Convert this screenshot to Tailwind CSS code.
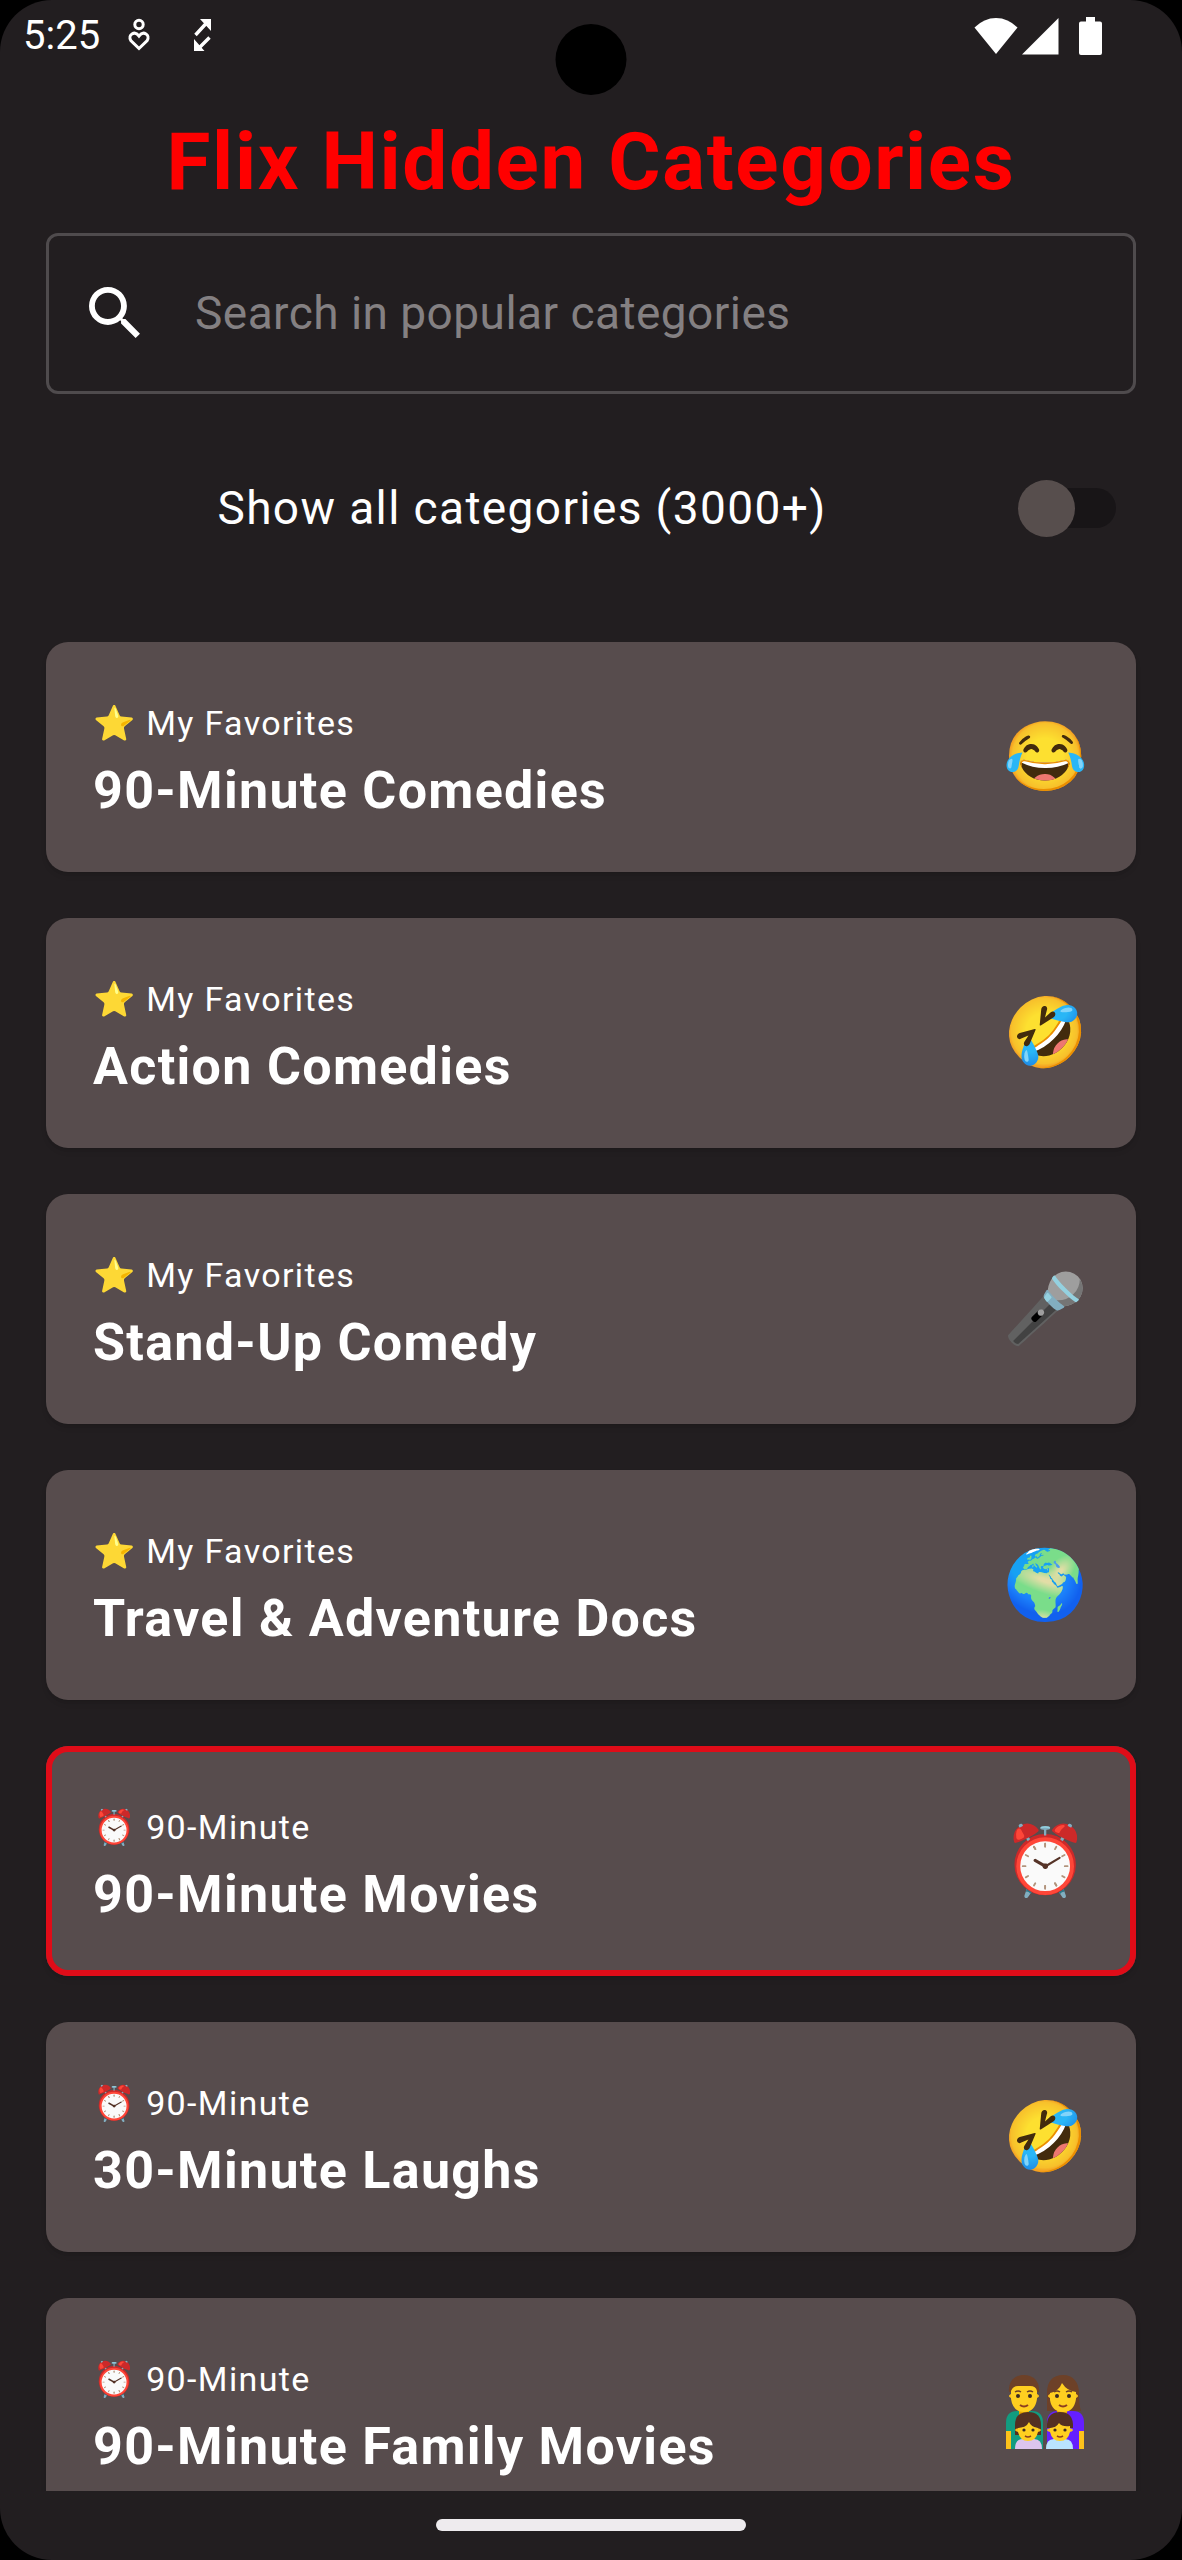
<!DOCTYPE html>
<html lang="en">
<head>
<meta charset="utf-8">
<meta name="viewport" content="width=device-width, initial-scale=1">
<title>Flix Hidden Categories</title>
<script src="https://cdn.jsdelivr.net/npm/@tailwindcss/browser@4"></script>
</head>
<body class="bg-black font-['Roboto',sans-serif] text-white">
<div class="relative flex h-screen flex-col overflow-hidden rounded-[52px] bg-[#221e20]">

  <!-- Status bar -->
  <header class="flex h-[72px] shrink-0 items-center justify-between pr-20 pl-[23px]">
    <div class="flex items-center">
      <time class="text-[40px] leading-none">5:25</time>
      <svg class="ml-7 h-9 w-[22px]" viewBox="0 0 22 36" fill="none" stroke="#fff" stroke-width="3" aria-hidden="true"><circle cx="11" cy="6.500" r="4.200"/><path d="M11 30.500 2.800 22.500C-.5 17 6.500 12 11 18c4.500-6 11.500-1 8.200 4.500Z"/></svg>
      <svg class="ml-11 h-9 w-[17px]" viewBox="0 0 17 36" fill="none" stroke="#fff" stroke-width="3.400" aria-hidden="true"><path d="m1.500 17 11-12M15.500 19.500l-11 11"/><path d="M6 1h11v12ZM0 21v12h10.500Z" fill="#fff" stroke="none"/></svg>
    </div>
    <div class="flex items-center">
      <svg class="h-[38px] w-[44px]" viewBox="0 0 44 38" fill="#fff" aria-hidden="true"><path d="M22 37 .5 10.500Q10 1 22 1t21.500 9.500Z"/></svg>
      <svg class="ml-1 h-[38px] w-[37px]" viewBox="0 0 37 38" fill="#fff" aria-hidden="true"><path d="M0 37.500 36.500 1v36.500Z"/></svg>
      <svg class="ml-5 h-[38px] w-[23px]" viewBox="0 0 23 38" fill="#fff" aria-hidden="true"><path d="M7 0h9v4.500h5q2 0 2 2V36q0 2-2 2H2q-2 0-2-2V6.500q0-2 2-2h5Z"/></svg>
    </div>
  </header>
  <!-- Camera cutout -->
  <div class="absolute top-6 left-1/2 size-[71px] -translate-x-1/2 rounded-full bg-black"></div>

  <main class="flex min-h-0 flex-1 flex-col px-[46px]">
    <h1 class="mt-[43px] text-center text-[80px] leading-[94px] font-bold tracking-[0.02em] text-[#ff0000]">Flix Hidden Categories</h1>

    <label class="mt-6 flex h-[161px] shrink-0 items-center rounded-xl border-3 border-[#4f4b4d] pr-10 pb-0.5 pl-10">
      <svg class="size-[51px] shrink-0" viewBox="3 3 17.500 17.500" fill="#fff" aria-hidden="true"><path d="M15.500 14h-.79l-.28-.27A6.471 6.471 0 0 0 16 9.500 6.500 6.500 0 1 0 9.500 16c1.610 0 3.090-.59 4.230-1.570l.27.28v.79l5 4.990L20.490 19l-4.990-5zm-6 0C7.010 14 5 11.990 5 9.500S7.010 5 9.500 5 14 7.010 14 9.500 11.990 14 9.500 14z"/></svg>
      <input type="search" aria-label="Search categories" placeholder="Search in popular categories" class="ml-[55px] h-full min-w-0 flex-1 text-[46px] tracking-[0.01em] outline-none placeholder:text-[#848082]">
    </label>

    <div class="mt-[68px] flex h-[92px] shrink-0 items-center pr-5">
      <label for="all" class="flex-1 pr-5 text-center text-[46px] tracking-[0.03em]">Show all categories (3000+)</label>
      <input id="all" type="checkbox" role="switch" class="relative h-10 w-[98px] appearance-none rounded-full bg-[#181517] before:absolute before:-top-2 before:left-0 before:size-[57px] before:rounded-full before:bg-[#574e4d] before:content-['']">
    </div>

    <ul class="-mx-[46px] mt-[88px] flex min-h-0 flex-1 flex-col gap-[46px] overflow-y-auto px-[46px] [scrollbar-width:none]">
      <li class="shrink-0"><button class="flex h-[230px] w-full items-center justify-between rounded-[22px] bg-[#574c4d] pr-12 pl-[47px] text-left shadow-md">
        <span class="pt-2"><span class="block text-[34px] leading-[46px] tracking-[0.04em]">⭐ My Favorites</span><span class="mt-3.5 block text-[52px] leading-[62px] font-bold tracking-wide">90-Minute Comedies</span></span>
        <span class="text-[68px] leading-none">😂</span></button></li>
      <li class="shrink-0"><button class="flex h-[230px] w-full items-center justify-between rounded-[22px] bg-[#574c4d] pr-12 pl-[47px] text-left shadow-md">
        <span class="pt-2"><span class="block text-[34px] leading-[46px] tracking-[0.04em]">⭐ My Favorites</span><span class="mt-3.5 block text-[52px] leading-[62px] font-bold tracking-wide">Action Comedies</span></span>
        <span class="text-[68px] leading-none">🤣</span></button></li>
      <li class="shrink-0"><button class="flex h-[230px] w-full items-center justify-between rounded-[22px] bg-[#574c4d] pr-12 pl-[47px] text-left shadow-md">
        <span class="pt-2"><span class="block text-[34px] leading-[46px] tracking-[0.04em]">⭐ My Favorites</span><span class="mt-3.5 block text-[52px] leading-[62px] font-bold tracking-wide">Stand-Up Comedy</span></span>
        <span class="text-[68px] leading-none">🎤</span></button></li>
      <li class="shrink-0"><button class="flex h-[230px] w-full items-center justify-between rounded-[22px] bg-[#574c4d] pr-12 pl-[47px] text-left shadow-md">
        <span class="pt-2"><span class="block text-[34px] leading-[46px] tracking-[0.04em]">⭐ My Favorites</span><span class="mt-3.5 block text-[52px] leading-[62px] font-bold tracking-wide">Travel &amp; Adventure Docs</span></span>
        <span class="text-[68px] leading-none">🌍</span></button></li>
      <li class="shrink-0"><button class="flex h-[230px] w-full items-center justify-between rounded-[22px] bg-[#574c4d] pr-12 pl-[47px] text-left shadow-md inset-ring-6 inset-ring-[#e00c18]">
        <span class="pt-2"><span class="block text-[34px] leading-[46px] tracking-[0.04em]">⏰ 90-Minute</span><span class="mt-3.5 block text-[52px] leading-[62px] font-bold tracking-wide">90-Minute Movies</span></span>
        <span class="text-[68px] leading-none">⏰</span></button></li>
      <li class="shrink-0"><button class="flex h-[230px] w-full items-center justify-between rounded-[22px] bg-[#574c4d] pr-12 pl-[47px] text-left shadow-md">
        <span class="pt-2"><span class="block text-[34px] leading-[46px] tracking-[0.04em]">⏰ 90-Minute</span><span class="mt-3.5 block text-[52px] leading-[62px] font-bold tracking-wide">30-Minute Laughs</span></span>
        <span class="text-[68px] leading-none">🤣</span></button></li>
      <li class="shrink-0"><button class="flex h-[230px] w-full items-center justify-between rounded-[22px] bg-[#574c4d] pr-12 pl-[47px] text-left shadow-md">
        <span class="pt-2"><span class="block text-[34px] leading-[46px] tracking-[0.04em]">⏰ 90-Minute</span><span class="mt-3.5 block text-[52px] leading-[62px] font-bold tracking-wide">90-Minute Family Movies</span></span>
        <svg class="mr-1 h-[76px] w-[78px]" viewBox="0 0 78 76" role="img" aria-label="Family">
          <path d="M0 74V48q0-12 11-12h15q11 0 11 12v26Z" fill="#129c80"/>
          <path d="M41 74V48q0-12 11-12h15q11 0 11 12v26Z" fill="#651fff"/>
          <path d="M0 56h5v18H0ZM73 56h5v18h-5Z" fill="#fcc21b"/>
          <path d="M13 30h10v10q-5 5-10 0ZM51 30h10v10q-5 5-10 0Z" fill="#e8a800"/>
          <path d="M3 17C2 6 9 0 18 0s16 6 15 17Z" fill="#6d4128"/>
          <path d="M41 36V18C41 6 47 0 57 0s16 7 16 18q0 12 2 18Z" fill="#6d4128"/>
          <ellipse cx="18" cy="21" rx="15" ry="4" fill="#fcc21b"/>
          <ellipse cx="57" cy="21" rx="15" ry="4" fill="#fcc21b"/>
          <path d="M5 16q2-5 7-5h12q6 0 7 5v8q-2 13-13 13T5 24ZM44 18q9-2 12-10 5 8 14 9v7q-2 13-13 13T44 25Z" fill="#ffcf20"/>
          <g fill="#3c2b24"><circle cx="12" cy="21" r="2"/><circle cx="24" cy="21" r="2"/><circle cx="51" cy="21" r="2"/><circle cx="63" cy="21" r="2"/></g>
          <g fill="none" stroke="#6d4128" stroke-width="1.500"><path d="M9 17q3-2 6 0M21 17q3-2 6 0M48 17q3-2 6 0M60 17q3-2 6 0"/><path d="M14 30q4 3 8 0M53 30q4 3 8 0" stroke="#8d3f20" stroke-width="2"/></g>
          <path d="M9 74q0-10 8-10h11q8 0 8 10Z" fill="#dcc5ee"/>
          <path d="M40 74q0-10 8-10h11q8 0 8 10Z" fill="#b9e4ff"/>
          <path d="M9 60V50q0-13 13-13t13 13v10Z" fill="#543022"/>
          <path d="M41 53q-1-16 13-16t13 16Z" fill="#543022"/>
          <ellipse cx="22" cy="55" rx="13" ry="3" fill="#fcc21b"/><ellipse cx="54" cy="55" rx="13" ry="3" fill="#fcc21b"/>
          <path d="M12 53q8 0 11-6 2 5 9 6v4q-2 9-10 9t-10-9ZM44 53q6 0 9-5 3 4 11 3v6q-2 9-10 9t-10-9Z" fill="#ffcf20"/>
          <g fill="#3c2b24"><circle cx="18" cy="55" r="1.600"/><circle cx="27" cy="55" r="1.600"/><circle cx="49" cy="55" r="1.600"/><circle cx="59" cy="55" r="1.600"/></g>
          <path d="M19 61q3 2 6 0M51 61q3 2 6 0" fill="none" stroke="#8d3f20" stroke-width="1.600"/>
        </svg></button></li>
    </ul>
  </main>

  <!-- Gesture bar -->
  <footer class="flex h-[69px] shrink-0 justify-center pt-7">
    <div class="h-3 w-[310px] rounded-full bg-[#eeebee]"></div>
  </footer>
</div>
</body>
</html>
